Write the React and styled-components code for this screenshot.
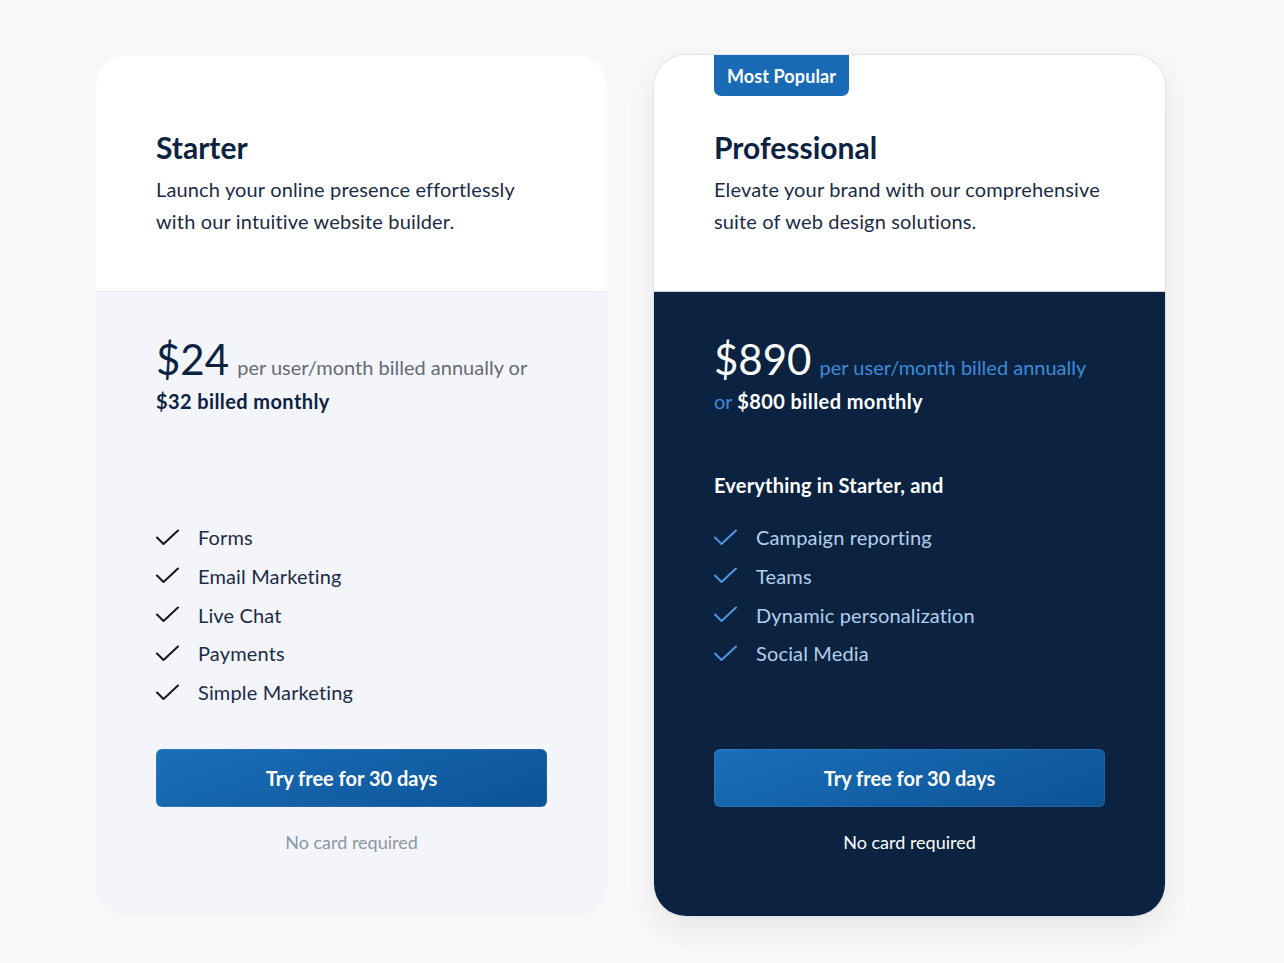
import React from 'react';
import styled, { createGlobalStyle, css } from 'styled-components';

const GlobalStyle = createGlobalStyle`
  html, body {
    margin: 0;
    padding: 0;
    background: #f8f8f8;
  }
  body {
    font-family: Lato, "Noto Sans", "Liberation Sans", sans-serif;
    color: #0b2341;
  }
`;

const Page = styled.div`
  display: flex;
  gap: 47px;
  padding: 55px 0 0 96px;
  min-height: 963px;
  box-sizing: border-box;
  align-items: flex-start;
`;

const Card = styled.div`
  position: relative;
  width: 511px;
  height: 861px;
  border-radius: 32px;
  overflow: hidden;
  display: flex;
  flex-direction: column;
  box-sizing: border-box;
  ${(p) =>
    p.$featured &&
    css`
      box-shadow: 0 0 0 1px #dfe4ea, 0 12px 30px rgba(20, 30, 50, 0.08);
    `}
`;

const Badge = styled.div`
  position: absolute;
  top: 0;
  left: 60px;
  height: 41px;
  padding: 0 13px;
  display: flex;
  align-items: center;
  background: #1a6bb5;
  color: #fff;
  font-size: 18px;
  font-weight: 700;
  letter-spacing: 0.1px;
  border-radius: 0 0 7px 7px;
`;

const Head = styled.div`
  background: #fff;
  padding: 74px 60px 0;
  height: 236px;
  box-sizing: border-box;
  flex-shrink: 0;
`;

const Title = styled.h2`
  margin: 0 0 8px;
  font-size: 30px;
  line-height: 36px;
  font-weight: 700;
  color: #0b2341;
`;

const Desc = styled.p`
  margin: 0;
  font-size: 20px;
  line-height: 32px;
  letter-spacing: 0.15px;
  color: #1c2b45;
  max-width: 395px;
`;

const Body = styled.div`
  flex: 1;
  display: flex;
  flex-direction: column;
  padding: 46px 60px 62px;
  border-top: 1px solid ${(p) => (p.$dark ? '#c6d0dc' : '#eceef5')};
  background: ${(p) => (p.$dark ? '#0b2341' : '#f4f5fb')};
`;

const Price = styled.p`
  margin: 0;
  font-size: 20px;
  line-height: 34px;
  color: ${(p) => (p.$dark ? '#3d8bd8' : '#676b72')};
  max-width: 395px;
`;

const Amount = styled.span`
  font-size: 42px;
  line-height: 1;
  font-weight: 400;
  margin-right: 3px;
  color: ${(p) => (p.$dark ? '#ffffff' : '#0b2341')};
`;

const Monthly = styled.b`
  font-weight: 700;
  letter-spacing: 0.4px;
  color: ${(p) => (p.$dark ? '#ffffff' : '#0b2341')};
`;

const ListHeading = styled.div`
  margin-top: 53px;
  height: 28px;
  font-size: 20px;
  line-height: 28px;
  font-weight: 700;
  letter-spacing: 0.2px;
  color: #fff;
`;

const List = styled.ul`
  list-style: none;
  margin: 24px 0 0;
  padding: 0;
  display: flex;
  flex-direction: column;
  gap: 10.75px;
`;

const Item = styled.li`
  display: flex;
  align-items: center;
  gap: 19px;
  font-size: 20px;
  line-height: 28px;
  letter-spacing: 0.15px;
  color: ${(p) => (p.$dark ? '#b3cfec' : '#1c2b45')};
`;

const Footer = styled.div`
  margin-top: auto;
  display: flex;
  flex-direction: column;
  align-items: center;
  gap: 23px;
`;

const Button = styled.button`
  width: 100%;
  height: 58px;
  border: none;
  border-radius: 6px;
  background: linear-gradient(160deg, #1b6fba 0%, #0c5295 100%);
  box-shadow: inset 0 0 0 1px rgba(255, 255, 255, 0.08);
  color: #fff;
  font-family: inherit;
  font-size: 20px;
  font-weight: 700;
  cursor: pointer;
`;

const Note = styled.div`
  font-size: 18px;
  line-height: 24px;
  color: ${(p) => (p.$dark ? '#ffffff' : '#8c96a4')};
`;

const Check = ({ color }) => (
  <svg width="23" height="17" viewBox="0 0 23 17" fill="none">
    <path
      d="M1 8.5 L7.5 15 L22 1.5"
      stroke={color}
      strokeWidth="2"
      strokeLinecap="round"
      strokeLinejoin="round"
    />
  </svg>
);

const plans = [
  {
    name: 'Starter',
    desc: 'Launch your online presence effortlessly with our intuitive website builder.',
    amount: '$24',
    per: 'per user/month billed annually or',
    monthly: '$32 billed monthly',
    heading: '',
    features: ['Forms', 'Email Marketing', 'Live Chat', 'Payments', 'Simple Marketing'],
  },
  {
    name: 'Professional',
    desc: 'Elevate your brand with our comprehensive suite of web design solutions.',
    amount: '$890',
    per: 'per user/month billed annually or',
    monthly: '$800 billed monthly',
    heading: 'Everything in Starter, and',
    features: ['Campaign reporting', 'Teams', 'Dynamic personalization', 'Social Media'],
    featured: true,
  },
];

const PlanCard = ({ plan }) => {
  const dark = !!plan.featured;
  return (
    <Card $featured={dark}>
      <Head>
        <Title>{plan.name}</Title>
        <Desc>{plan.desc}</Desc>
      </Head>
      <Body $dark={dark}>
        <Price $dark={dark}>
          <Amount $dark={dark}>{plan.amount}</Amount> {plan.per}{' '}
          <Monthly $dark={dark}>{plan.monthly}</Monthly>
        </Price>
        <ListHeading>{plan.heading}</ListHeading>
        <List>
          {plan.features.map((f) => (
            <Item key={f} $dark={dark}>
              <Check color={dark ? '#4f97e0' : '#14161c'} />
              {f}
            </Item>
          ))}
        </List>
        <Footer>
          <Button>Try free for 30 days</Button>
          <Note $dark={dark}>No card required</Note>
        </Footer>
      </Body>
      {dark && <Badge>Most Popular</Badge>}
    </Card>
  );
};

export default function App() {
  return (
    <>
      <GlobalStyle />
      <Page>
        {plans.map((p) => (
          <PlanCard key={p.name} plan={p} />
        ))}
      </Page>
    </>
  );
}
